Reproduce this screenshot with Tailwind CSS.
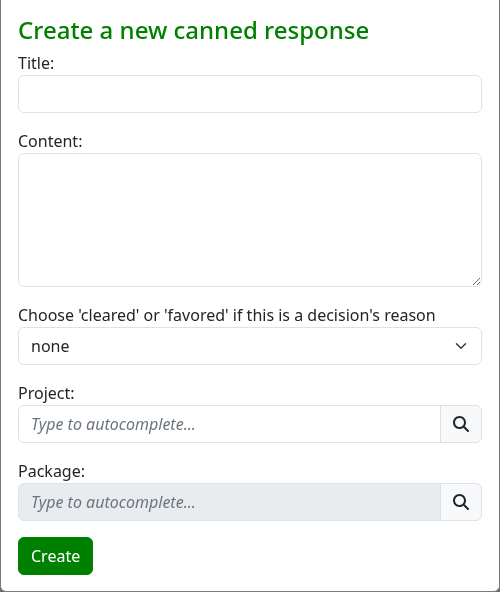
<!DOCTYPE html>
<html lang="en">
<head>
    <meta charset="UTF-8">
    <title>Create a new canned response</title>
    <script src="https://cdn.jsdelivr.net/npm/@tailwindcss/browser@4"></script>
</head>
<body class="bg-[#6c6c6c] h-[592px] overflow-hidden font-['Noto_Sans',sans-serif] text-[16px] leading-[24px] text-[#212529]">
    <div class="h-[592px] bg-white border-x border-b border-[#7a7a7a] rounded-b-[6px] px-[17px] pt-[15px] will-change-transform">
        <h3 class="text-[24px] leading-[29px] font-medium text-[#008000] mb-[7px]">Create a new canned response</h3>
        <form>
            <!-- Title -->
            <div class="mb-4">
                <label class="block">Title:</label>
                <input type="text" class="block w-full h-[38px] bg-white border border-[#dee2e6] rounded-md px-3">
            </div>
            <!-- Content -->
            <div class="mb-4">
                <label class="block">Content:</label>
                <textarea class="block w-full h-[134px] bg-white border border-[#dee2e6] rounded-md px-3 py-1.5 resize-y"></textarea>
            </div>
            <!-- Reason -->
            <div class="mb-4">
                <label class="block">Choose 'cleared' or 'favored' if this is a decision's reason</label>
                <div class="relative">
                    <select class="block w-full h-[38px] appearance-none bg-white border border-[#dee2e6] rounded-md pl-3 pr-9">
                        <option>none</option>
                    </select>
                    <svg class="absolute right-[13px] top-[13px] w-4 h-3 pointer-events-none" viewBox="0 0 16 16" fill="none" stroke="#343a40" stroke-width="2" stroke-linecap="round" stroke-linejoin="round"><path d="m2 5 6 6 6-6"/></svg>
                </div>
            </div>
            <!-- Project -->
            <div class="mb-4">
                <label class="block">Project:</label>
                <div class="flex">
                    <input type="text" placeholder="Type to autocomplete..." class="flex-1 min-w-0 h-[38px] bg-white border border-[#dee2e6] rounded-l-md px-3 italic placeholder:text-[#6c757d]">
                    <span class="w-[42px] h-[38px] -ml-px flex items-center justify-center bg-[#f8f9fa] border border-[#dee2e6] rounded-r-md">
                        <svg class="w-4 h-4" viewBox="0 0 512 512" fill="#212529"><path d="M416 208c0 45.9-14.9 88.3-40 122.7L502.6 457.4c12.5 12.5 12.5 32.8 0 45.3s-32.8 12.5-45.3 0L330.7 376c-34.4 25.2-76.8 40-122.7 40C93.1 416 0 322.9 0 208S93.1 0 208 0S416 93.1 416 208zM208 352a144 144 0 1 0 0-288 144 144 0 1 0 0 288z"/></svg>
                    </span>
                </div>
            </div>
            <!-- Package -->
            <div class="mb-4">
                <label class="block">Package:</label>
                <div class="flex">
                    <input type="text" disabled placeholder="Type to autocomplete..." class="flex-1 min-w-0 h-[38px] bg-[#e9ecef] border border-[#dee2e6] rounded-l-md px-3 italic placeholder:text-[#6c757d]">
                    <span class="w-[42px] h-[38px] -ml-px flex items-center justify-center bg-[#f8f9fa] border border-[#dee2e6] rounded-r-md">
                        <svg class="w-4 h-4" viewBox="0 0 512 512" fill="#212529"><path d="M416 208c0 45.9-14.9 88.3-40 122.7L502.6 457.4c12.5 12.5 12.5 32.8 0 45.3s-32.8 12.5-45.3 0L330.7 376c-34.4 25.2-76.8 40-122.7 40C93.1 416 0 322.9 0 208S93.1 0 208 0S416 93.1 416 208zM208 352a144 144 0 1 0 0-288 144 144 0 1 0 0 288z"/></svg>
                    </span>
                </div>
            </div>
            <button type="button" class="h-[38px] px-3 bg-[#008000] text-white border border-[#008000] rounded-md">Create</button>
        </form>
    </div>
</body>
</html>
